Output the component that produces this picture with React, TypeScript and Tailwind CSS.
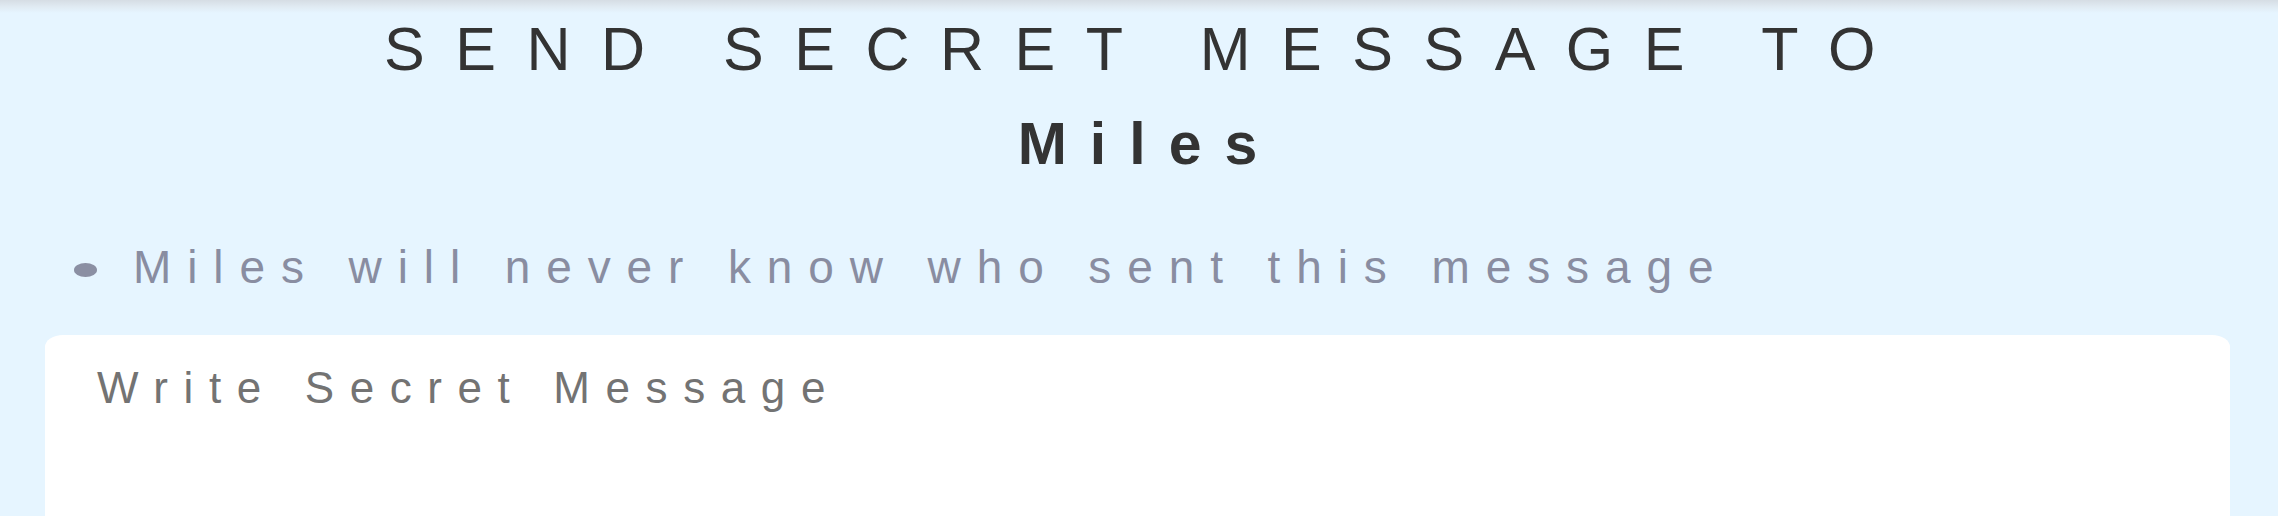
import { useState } from 'react';

export default function App() {
  const [message, setMessage] = useState('');
  const recipient = 'Miles';

  return (
    <div className="min-h-screen bg-[#e6f5ff] font-['Liberation_Sans',Arial,sans-serif] overflow-hidden">
      {/* shadow under the fixed header */}
      <div className="h-[13px] bg-gradient-to-b from-[#d6dde4] via-[#e0eaf2] to-[#e6f5ff]" />

      <div className="flex flex-col items-center">
        <h1 className="mt-[6px] pl-[12px] text-[61px] leading-none font-normal tracking-[30.5px] text-[#333333]">
          SEND SECRET MESSAGE TO
        </h1>
        <h2 className="mt-[35px] pl-[20px] text-[59px] leading-none font-bold tracking-[23px] text-[#333333]">
          {recipient}
        </h2>
      </div>

      <div className="pl-[45px] pr-[48px]">
        <ul className="mt-[70px] ml-[29px]">
          <li className="flex items-center gap-[36px]">
            <span className="mt-[6px] h-[14px] w-[23px] shrink-0 rounded-[50%] bg-[#8b8fa3]" />
            <span className="text-[46px] leading-[46px] tracking-[15.9px] text-[#898da1]">
              {recipient} will never know who sent this message
            </span>
          </li>
        </ul>

        <textarea
          value={message}
          onChange={(e) => setMessage(e.target.value)}
          placeholder="Write Secret Message"
          className="mt-[45px] block h-[240px] w-full resize-none rounded-[18px/12px] bg-white pt-[31px] pl-[52px] pr-[52px] text-[44px] leading-[44px] tracking-[15.6px] text-[#333333] placeholder:text-[#737373] outline-none"
        />
      </div>
    </div>
  );
}
